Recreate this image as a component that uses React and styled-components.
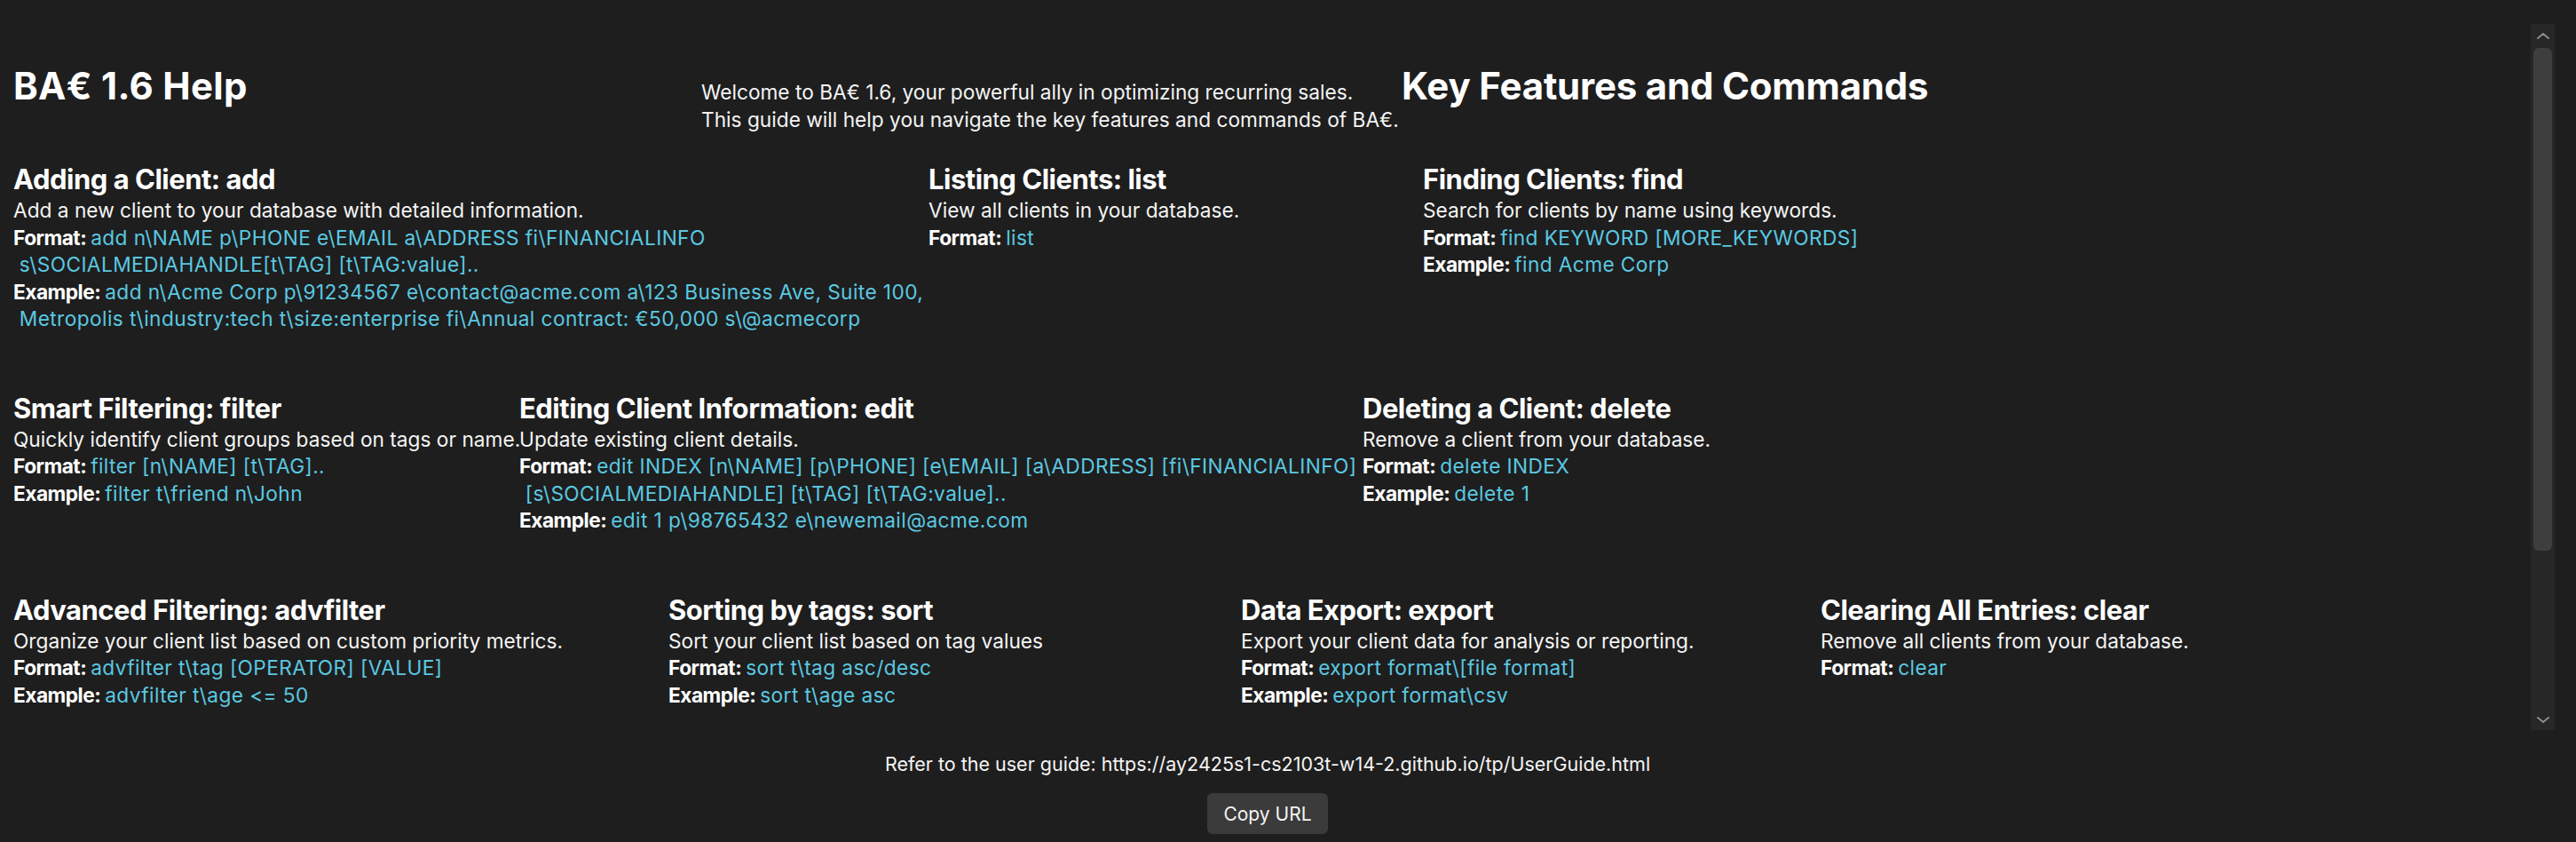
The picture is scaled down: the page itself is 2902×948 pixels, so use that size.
import React from "react";
import styled, { createGlobalStyle } from "styled-components";

const GlobalStyle = createGlobalStyle`
  html, body {
    margin: 0;
    padding: 0;
    background: #1e1e1e;
  }
  body {
    font-family: "Inter", "Noto Sans", sans-serif;
    color: #ffffff;
  }
`;

const rows = [
  {
    widths: [1031, 557, null],
    items: [
      {
        title: "Adding a Client: add",
        desc: "Add a new client to your database with detailed information.",
        format: [
          "add n\\NAME p\\PHONE e\\EMAIL a\\ADDRESS fi\\FINANCIALINFO",
          " s\\SOCIALMEDIAHANDLE[t\\TAG] [t\\TAG:value]..",
        ],
        example: [
          "add n\\Acme Corp p\\91234567 e\\contact@acme.com a\\123 Business Ave, Suite 100,",
          " Metropolis t\\industry:tech t\\size:enterprise fi\\Annual contract: €50,000 s\\@acmecorp",
        ],
      },
      {
        title: "Listing Clients: list",
        desc: "View all clients in your database.",
        format: ["list"],
      },
      {
        title: "Finding Clients: find",
        desc: "Search for clients by name using keywords.",
        format: ["find KEYWORD [MORE_KEYWORDS]"],
        example: ["find Acme Corp"],
      },
    ],
  },
  {
    widths: [570, 950, null],
    items: [
      {
        title: "Smart Filtering: filter",
        desc: "Quickly identify client groups based on tags or name.",
        format: ["filter [n\\NAME] [t\\TAG].."],
        example: ["filter t\\friend n\\John"],
      },
      {
        title: "Editing Client Information: edit",
        desc: "Update existing client details.",
        format: [
          "edit INDEX [n\\NAME] [p\\PHONE] [e\\EMAIL] [a\\ADDRESS] [fi\\FINANCIALINFO]",
          " [s\\SOCIALMEDIAHANDLE] [t\\TAG] [t\\TAG:value]..",
        ],
        example: ["edit 1 p\\98765432 e\\newemail@acme.com"],
      },
      {
        title: "Deleting a Client: delete",
        desc: "Remove a client from your database.",
        format: ["delete INDEX"],
        example: ["delete 1"],
      },
    ],
  },
  {
    widths: [738, 645, 653, null],
    items: [
      {
        title: "Advanced Filtering: advfilter",
        desc: "Organize your client list based on custom priority metrics.",
        format: ["advfilter t\\tag [OPERATOR] [VALUE]"],
        example: ["advfilter t\\age <= 50"],
      },
      {
        title: "Sorting by tags: sort",
        desc: "Sort your client list based on tag values",
        format: ["sort t\\tag asc/desc"],
        example: ["sort t\\age asc"],
      },
      {
        title: "Data Export: export",
        desc: "Export your client data for analysis or reporting.",
        format: ["export format\\[file format]"],
        example: ["export format\\csv"],
      },
      {
        title: "Clearing All Entries: clear",
        desc: "Remove all clients from your database.",
        format: ["clear"],
      },
    ],
  },
];

const Chevron = ({ down }) => (
  <svg width="14" height="7" viewBox="0 0 14 7">
    <path
      d={down ? "M1 1 L7 6 L13 1" : "M1 6 L7 1 L13 6"}
      fill="none"
      stroke="#8c8c8c"
      strokeWidth="2"
      strokeLinecap="round"
      strokeLinejoin="round"
    />
  </svg>
);

const CommandLine = ({ label, lines }) => (
  <>
    {lines.map((line, i) => (
      <Line key={i}>
        {i === 0 && <Label>{label}: </Label>}
        <Code>{line}</Code>
      </Line>
    ))}
  </>
);

const App = () => {
  return (
    <Window>
      <GlobalStyle />
      <Main>
        <Content>
          <Header>
            <Title $first>BA€ 1.6 Help</Title>
            <Welcome>
              <Line>Welcome to BA€ 1.6, your powerful ally in optimizing recurring sales.</Line>
              <Line>This guide will help you navigate the key features and commands of BA€.</Line>
            </Welcome>
            <Title>Key Features and Commands</Title>
          </Header>

          {rows.map((row, r) => (
            <Row key={r}>
              {row.items.map((item, i) => (
                <Section key={i} $width={row.widths[i]}>
                  <Heading>{item.title}</Heading>
                  <Line>{item.desc}</Line>
                  <CommandLine label="Format" lines={item.format} />
                  {item.example && <CommandLine label="Example" lines={item.example} />}
                </Section>
              ))}
            </Row>
          ))}
        </Content>

        <ScrollBar>
          <ArrowBox $h={27}>
            <Chevron />
          </ArrowBox>
          <Thumb />
          <ArrowBox $h={24} $end>
            <Chevron down />
          </ArrowBox>
        </ScrollBar>
      </Main>

      <Footer>
        <GuideText>
          Refer to the user guide: https://ay2425s1-cs2103t-w14-2.github.io/tp/UserGuide.html
        </GuideText>
        <CopyButton>Copy URL</CopyButton>
      </Footer>
    </Window>
  );
};

const Window = styled.div`
  width: 2902px;
  height: 948px;
  display: flex;
  flex-direction: column;
  background: #1e1e1e;
  overflow: hidden;
`;

const Main = styled.div`
  display: flex;
  flex-direction: row;
  margin-top: 27px;
  height: 795px;
`;

const Content = styled.div`
  flex: 1;
  padding: 43px 0 0 15px;
  overflow: hidden;
`;

const Header = styled.div`
  display: flex;
  align-items: baseline;
  margin-bottom: 33px;
`;

const Title = styled.h1`
  margin: 0;
  font-size: 42px;
  line-height: 53px;
  font-weight: 700;
  letter-spacing: ${(p) => (p.$first ? "0.3px" : "-0.2px")};
  color: #ffffff;
  white-space: nowrap;
  width: ${(p) => (p.$first ? "775px" : "auto")};
`;

const Welcome = styled.div`
  width: 789px;
`;

const Row = styled.div`
  display: flex;
  align-items: flex-start;
  margin-bottom: 66px;
`;

const Section = styled.div`
  width: ${(p) => (p.$width ? `${p.$width}px` : "auto")};
  flex-shrink: 0;
  display: flex;
  flex-direction: column;
`;

const Heading = styled.h2`
  margin: 0 0 1px;
  font-size: 31px;
  line-height: 38px;
  font-weight: 700;
  letter-spacing: -0.5px;
  color: #ffffff;
  white-space: nowrap;
`;

const Line = styled.div`
  font-size: 22.7px;
  line-height: 30.5px;
  color: #f4f4f4;
  white-space: pre;
`;

const Label = styled.span`
  font-weight: 700;
  color: #ffffff;
  letter-spacing: -0.5px;
`;

const Code = styled.span`
  color: #5bc8e1;
  letter-spacing: 0.4px;
`;

const ScrollBar = styled.div`
  width: 27px;
  margin-right: 24px;
  background: #272727;
  display: flex;
  flex-direction: column;
  align-items: center;
`;

const ArrowBox = styled.div`
  height: ${(p) => p.$h}px;
  width: 100%;
  display: flex;
  align-items: center;
  justify-content: center;
  margin-top: ${(p) => (p.$end ? "auto" : "0")};
`;

const Thumb = styled.div`
  width: 21px;
  height: 566px;
  border-radius: 6px;
  background: #3e3e3e;
`;

const Footer = styled.div`
  display: flex;
  flex-direction: column;
  align-items: center;
  padding: 25px 46px 0 0;
`;

const GuideText = styled.div`
  font-size: 21.5px;
  line-height: 26px;
  color: #f4f4f4;
  white-space: nowrap;
`;

const CopyButton = styled.button`
  margin-top: 20px;
  height: 46px;
  padding: 0 18px;
  border: none;
  border-radius: 6px;
  background: #3b3b3b;
  color: #f4f4f4;
  font-family: "Inter", "Noto Sans", sans-serif;
  font-size: 21px;
  cursor: pointer;
`;

export default App;
